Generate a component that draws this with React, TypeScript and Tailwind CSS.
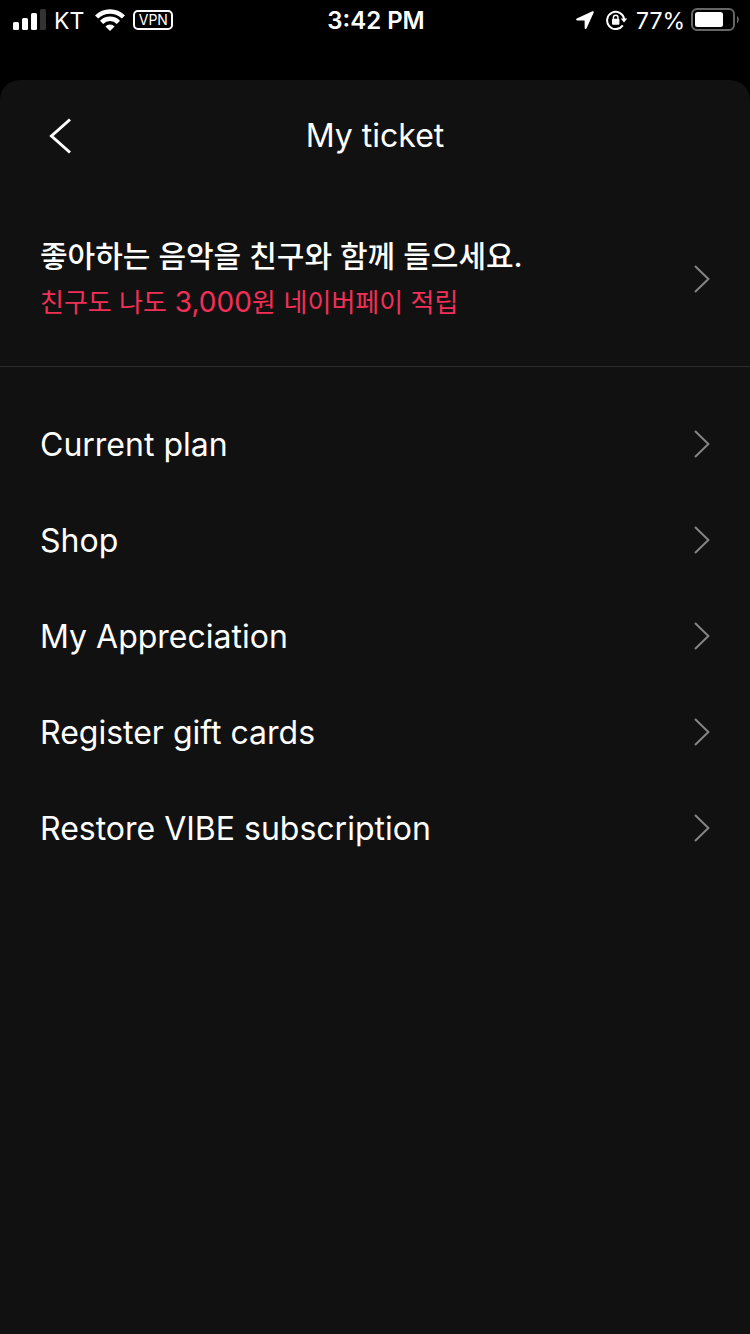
import React from "react";

const menuItems = [
  "Current plan",
  "Shop",
  "My Appreciation",
  "Register gift cards",
  "Restore VIBE subscription",
];

const ChevronIcon: React.FC = () => (
  <svg
    className="flex-none w-4 h-7"
    viewBox="0 0 16 28"
    fill="none"
    stroke="#858585"
    strokeWidth="2"
    aria-hidden="true"
  >
    <path d="M1 1l13.4 13L1 27" />
  </svg>
);

const SignalIcon: React.FC = () => (
  <svg className="w-[33px] h-[22px]" viewBox="0 0 33 22" fill="#fff" aria-hidden="true">
    <rect x="0" y="13" width="6" height="8" rx="1.5" />
    <rect x="9" y="9" width="6" height="12" rx="1.5" />
    <rect x="18" y="4" width="6" height="17" rx="1.5" />
    <rect x="27" y="0" width="6" height="21" rx="1.5" fill="#333" />
  </svg>
);

const WifiIcon: React.FC = () => (
  <svg className="w-[30px] h-[22px]" viewBox="0 0 30 22" aria-hidden="true">
    <g fill="none" stroke="#fff" strokeWidth="4.5">
      <path d="M1.6 8a19.2 19.2 0 0 1 26.8 0" />
      <path d="M6.6 13.3a12 12 0 0 1 16.8 0" />
    </g>
    <path d="M15 22l-4.6-4.6a6.6 6.6 0 0 1 9.2 0z" fill="#fff" />
  </svg>
);

const LocationIcon: React.FC = () => (
  <svg className="w-[18px] h-[18px]" viewBox="0 0 18 18" aria-hidden="true">
    <path
      d="M16.4.3L.8 7.5c-1 .5-.8 1.9.3 1.9l7.2.2c.2 0 .3.1.3.3l.1 7c0 1.1 1.4 1.4 1.9.4L17.7 1.6c.4-.9-.4-1.7-1.3-1.3z"
      fill="#fff"
    />
  </svg>
);

const RotationLockIcon: React.FC = () => (
  <svg className="w-[22px] h-5" viewBox="0 0 22 20" aria-hidden="true">
    <path
      d="M16.8 15.4A8.6 8.6 0 1 1 18.2 9"
      fill="none"
      stroke="#fff"
      strokeWidth="2"
    />
    <path d="M14.7 8.4h6.6l-3.3 4.2z" fill="#fff" />
    <path
      d="M7.4 9.5V7.6a2.3 2.3 0 0 1 4.6 0v1.9"
      fill="none"
      stroke="#fff"
      strokeWidth="1.4"
    />
    <rect x="6" y="8.8" width="7.4" height="6" rx="1" fill="#fff" />
  </svg>
);

const BatteryIcon: React.FC = () => (
  <svg className="w-12 h-6" viewBox="0 0 48 24" aria-hidden="true">
    <rect
      x="1"
      y="1"
      width="42"
      height="21"
      rx="5"
      fill="none"
      stroke="#666"
      strokeWidth="2"
    />
    <rect x="4" y="4" width="28" height="15" rx="2.5" fill="#fff" />
    <path d="M46 8c2.4 1 2.4 6 0 7z" fill="#666" />
  </svg>
);

const StatusBar: React.FC = () => (
  <div className="grid grid-cols-[1fr_auto_1fr] items-center h-10 pl-[13px] pr-[11px]">
    <div className="flex items-center text-[23px]">
      <SignalIcon />
      <span className="ml-2 pt-0.5">KT</span>
      <span className="ml-[11px]">
        <WifiIcon />
      </span>
      <span className="ml-2 flex items-center justify-center w-10 h-5 rounded-[5px] border-2 border-white text-sm">
        VPN
      </span>
    </div>
    <span className="pt-0.5 text-2xl font-semibold">3:42 PM</span>
    <div className="flex items-center justify-end text-[23px]">
      <LocationIcon />
      <span className="ml-3">
        <RotationLockIcon />
      </span>
      <span className="ml-2 pt-0.5">77%</span>
      <span className="ml-[6px]">
        <BatteryIcon />
      </span>
    </div>
  </div>
);

const Header: React.FC = () => (
  <header className="grid grid-cols-[1fr_auto_1fr] items-center h-28 px-10">
    <button type="button" aria-label="Back" className="justify-self-start px-2 py-2">
      <svg
        className="w-6 h-9"
        viewBox="0 0 24 36"
        fill="none"
        stroke="#fff"
        strokeWidth="3"
        aria-hidden="true"
      >
        <path d="M22 1.5L3.5 18 22 34.5" />
      </svg>
    </button>
    <h1 className="text-[32px]">My ticket</h1>
  </header>
);

const App: React.FC = () => {
  return (
    <div className="flex flex-col min-h-screen bg-black text-white font-['Inter','Noto_Sans_CJK_KR',sans-serif]">
      <StatusBar />
      <main className="flex-1 mt-10 rounded-t-[20px] bg-[#111]">
        <Header />
        <a
          href="#invite"
          className="flex items-center justify-between px-10 pt-10 pb-[41px] border-b border-[#2b2b2b]"
        >
          <div lang="ko">
            <p className="text-[30px] leading-12 font-medium">
              좋아하는 음악을 친구와 함께 들으세요.
            </p>
            <p className="text-[26px] leading-11 text-[#f12f57]">
              친구도 나도<span className="text-[28px]"> 3,000</span>원
              <span className="text-[28px]"> </span>네이버페이 적립
            </p>
          </div>
          <ChevronIcon />
        </a>
        <nav className="py-[29px]">
          {menuItems.map((item) => (
            <a
              key={item}
              href="#"
              className="flex items-center justify-between h-24 px-10 text-[32px]"
            >
              <span className="pt-px">{item}</span>
              <ChevronIcon />
            </a>
          ))}
        </nav>
      </main>
    </div>
  );
};

export default App;
